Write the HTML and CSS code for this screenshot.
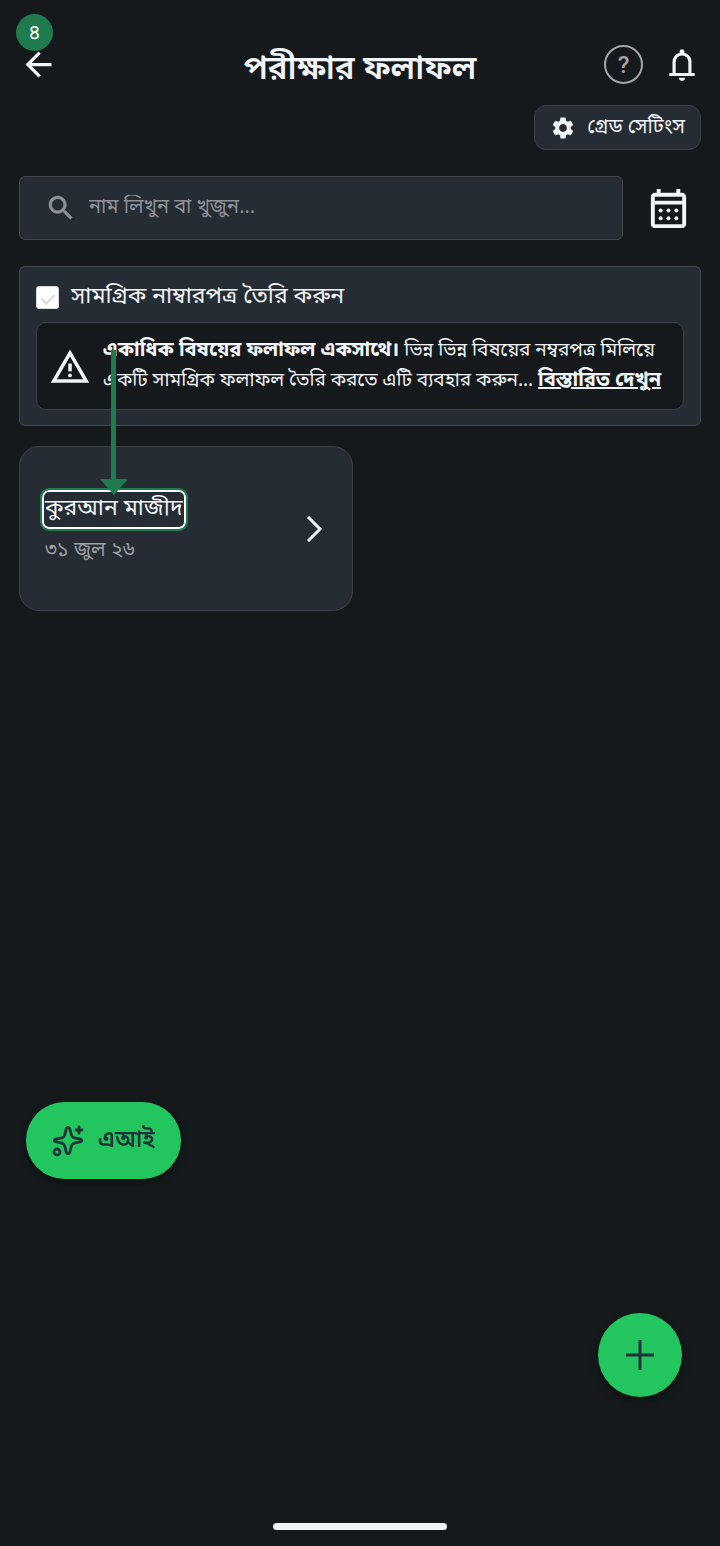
FILE: index.html
```html
<!DOCTYPE html>
<html lang="bn">
<head>
  <meta charset="UTF-8" />
  <meta name="viewport" content="width=device-width, initial-scale=1" />
  <title>পরীক্ষার ফলাফল</title>
  <link rel="stylesheet" href="styles.css">
</head>
<body>
  <header class="topbar">
    <button class="icon-btn back" aria-label="Back">
      <svg width="39" height="39" viewBox="0 0 24 24" fill="currentColor"><path d="M20 11H7.83l5.59-5.59L12 4l-8 8 8 8 1.41-1.41L7.83 13H20v-2z"/></svg>
    </button>
    <h1>পরীক্ষার ফলাফল</h1>
    <div class="topbar-actions">
      <button class="icon-btn help" aria-label="Help">?</button>
      <button class="icon-btn" aria-label="Notifications">
        <svg width="38" height="38" viewBox="0 0 24 24" fill="currentColor"><path d="M4 19v-2h2v-7q0-2.075 1.25-3.687T10.5 4.2v-.7q0-.625.438-1.062T12 2t1.063.438T13.5 3.5v.7q2 .5 3.25 2.113T18 10v7h2v2zm8 3q-.825 0-1.412-.587T10 20h4q0 .825-.587 1.413T12 22m-4-5h8v-7q0-1.65-1.175-2.825T12 6T9.175 7.175T8 10z"/></svg>
      </button>
    </div>
    <span class="step-badge">৪</span>
  </header>

  <main>
    <button class="grade-btn">
      <svg width="26" height="26" viewBox="0 0 24 24" fill="currentColor"><path d="M19.14 12.94c.04-.3.06-.61.06-.94 0-.32-.02-.64-.07-.94l2.03-1.58c.18-.14.23-.41.12-.61l-1.92-3.32c-.12-.22-.37-.29-.59-.22l-2.39.96c-.5-.38-1.03-.7-1.62-.94l-.36-2.54c-.04-.24-.24-.41-.48-.41h-3.84c-.24 0-.43.17-.47.41l-.36 2.54c-.59.24-1.13.57-1.62.94l-2.39-.96c-.22-.08-.47 0-.59.22L2.74 8.87c-.12.21-.08.47.12.61l2.03 1.58c-.05.3-.09.63-.09.94s.02.64.07.94l-2.03 1.58c-.18.14-.23.41-.12.61l1.92 3.32c.12.22.37.29.59.22l2.39-.96c.5.38 1.03.7 1.62.94l.36 2.54c.05.24.24.41.48.41h3.84c.24 0 .44-.17.47-.41l.36-2.54c.59-.24 1.13-.56 1.62-.94l2.39.96c.22.08.47 0 .59-.22l1.92-3.32c.12-.22.07-.47-.12-.61l-2.01-1.58zM12 15.6c-1.98 0-3.6-1.62-3.6-3.6s1.62-3.6 3.6-3.6 3.6 1.62 3.6 3.6-1.62 3.6-3.6 3.6z"/></svg>
      গ্রেড সেটিংস
    </button>

    <div class="search-row">
      <label class="search">
        <svg width="32" height="32" viewBox="0 0 24 24" fill="currentColor"><path d="M15.5 14h-.79l-.28-.27C15.41 12.59 16 11.11 16 9.5 16 5.91 13.09 3 9.5 3S3 5.91 3 9.5 5.91 16 9.5 16c1.61 0 3.09-.59 4.23-1.57l.27.28v.79l5 4.99L20.49 19l-4.99-5zm-6 0C7.01 14 5 11.99 5 9.5S7.01 5 9.5 5 14 7.01 14 9.5 11.99 14 9.5 14z" stroke="currentColor" stroke-width=".4"/></svg>
        <input type="text" placeholder="নাম লিখুন বা খুজুন..." aria-label="নাম লিখুন বা খুজুন" />
      </label>
      <button class="icon-btn calendar" aria-label="Calendar">
        <svg width="47" height="47" viewBox="0 0 24 24" fill="currentColor">
          <path d="M5 22q-.825 0-1.412-.587T3 20V6q0-.825.588-1.412T5 4h1V2h2v2h8V2h2v2h1q.825 0 1.413.588T21 6v14q0 .825-.587 1.413T19 22zm0-2h14V10H5zM5 8h14V6H5z"/>
          <circle cx="8" cy="13" r="1"/><circle cx="12" cy="13" r="1"/><circle cx="16" cy="13" r="1"/>
          <circle cx="8" cy="17" r="1"/><circle cx="12" cy="17" r="1"/><circle cx="16" cy="17" r="1"/>
        </svg>
      </button>
    </div>

    <section class="combined">
      <label class="check-row">
        <input type="checkbox" checked />
        সামগ্রিক নাম্বারপত্র তৈরি করুন
      </label>
      <div class="notice">
        <svg width="42" height="42" viewBox="0 0 24 24" fill="currentColor"><path d="M12 5.99 19.53 19H4.47L12 5.99M12 2 1 21h22L12 2z"/><path d="M11 10h2v4.5h-2z"/><circle cx="12" cy="16.8" r="1.1"/></svg>
        <p><strong>একাধিক বিষয়ের ফলাফল একসাথে।</strong> ভিন্ন ভিন্ন বিষয়ের নম্বরপত্র মিলিয়ে একটি সামগ্রিক ফলাফল তৈরি করতে এটি ব্যবহার করুন... <a href="#">বিস্তারিত দেখুন</a></p>
      </div>
    </section>

    <div class="cards">
      <a class="card" href="#">
        <div class="card-text">
          <span class="subject">কুরআন মাজীদ<svg class="pointer" width="28" height="145" viewBox="0 0 28 145" fill="currentColor"><path d="M11 0h5v129h12L14 145 0 129h11z"/></svg></span>
          <span class="date">৩১ জুল ২৬</span>
        </div>
        <svg width="17" height="26" viewBox="0 0 17 26" fill="none" stroke="currentColor" stroke-width="3"><path d="M2 1l12 12L2 25"/></svg>
      </a>
    </div>
  </main>

  <button class="ai-btn">
    <svg width="32" height="32" viewBox="0 0 32 32" fill="none" stroke="currentColor" stroke-width="2.8" stroke-linejoin="round" stroke-linecap="round">
      <path d="M14.3 3.6q1.7-2.6 3.4 0l1.7 6.3q.7 2.2 2.9 2.9l6.3 1.3q2.4 1.3 0 2.6l-6.3 1.5q-2.2.7-2.9 2.9l-1.7 6.3q-1.7 2.6-3.4 0l-1.5-6.3q-.7-2.2-2.9-2.9l-6.3-1.5q-2.4-1.3 0-2.6l6.3-1.3q2.2-.7 2.9-2.9z"/>
      <path d="M27 2v6M24 5h6"/>
      <circle cx="5" cy="27" r="3"/>
    </svg>
    এআই
  </button>
  <button class="add-btn" aria-label="Add">
    <svg width="30" height="30" viewBox="0 0 30 30" stroke="currentColor" stroke-width="3"><path d="M15 0v30M1 15h28"/></svg>
  </button>
  <div class="home-bar"></div>
</body>
</html>
```

FILE: styles.css
```css
* {
  box-sizing: border-box;
}

body {
  margin: 0;
  min-height: 100vh;
  background: #15191c;
  color: #f1f4f9;
  font-family: "Noto Sans Bengali", "Noto Sans", sans-serif;
  font-size: 20px;
}

button {
  font: inherit;
  color: inherit;
  border: none;
  cursor: pointer;
}

svg {
  display: block;
  flex: none;
}

.topbar {
  position: relative;
  display: grid;
  grid-template-columns: 1fr auto 1fr;
  align-items: center;
  height: 105px;
  padding: 24px 19px 0;
}

.topbar h1 {
  margin: 0;
  padding-top: 12px;
  font-size: 33px;
  font-weight: 600;
  line-height: 40px;
}

.topbar-actions {
  display: flex;
  align-items: center;
  justify-content: flex-end;
  gap: 20px;
}

.icon-btn {
  padding: 0;
  background: none;
}

.back {
  justify-self: start;
}

.help {
  width: 39px;
  height: 39px;
  border: 2px solid #a3a5a7;
  border-radius: 50%;
  color: #a3a5a7;
  font-family: Roboto, sans-serif;
  font-size: 24px;
  font-weight: 500;
  line-height: 32px;
}

.step-badge {
  position: absolute;
  top: 14px;
  left: 16px;
  width: 37px;
  height: 37px;
  border-radius: 50%;
  background: #1f7a4d;
  color: white;
  text-align: center;
  line-height: 40px;
}

main {
  display: flex;
  flex-direction: column;
  padding: 0 19px;
}

.grade-btn {
  align-self: flex-end;
  display: flex;
  align-items: center;
  gap: 11px;
  height: 45px;
  padding: 0 15px;
  background: #262c33;
  border: 1px solid #3d4045;
  border-radius: 12px;
}

.search-row {
  display: flex;
  align-items: center;
  gap: 22px;
  margin-top: 26px;
}

.search {
  flex: 1;
  display: flex;
  align-items: center;
  gap: 12px;
  height: 64px;
  padding: 0 25px;
  background: #262c33;
  border: 1px solid #45484c;
  border-radius: 6px;
  color: #8e9298;
}

.search input {
  flex: 1;
  min-width: 0;
  padding: 0;
  background: none;
  border: none;
  outline: none;
  color: #f1f4f9;
  font: inherit;
  line-height: 40px;
}

.search input::placeholder {
  color: #8e9298;
  opacity: 1;
  line-height: 40px;
}

.calendar {
  margin-right: 9px;
}

.combined {
  margin-top: 26px;
  padding: 8px 16px 15px;
  background: #262c33;
  border: 1px solid #45484c;
  border-radius: 6px;
}

.check-row {
  display: flex;
  align-items: center;
  gap: 12px;
  margin-bottom: 3px;
  height: 44px;
  font-size: 23px;
}

.check-row input {
  appearance: none;
  display: grid;
  place-items: center;
  width: 23px;
  height: 23px;
  margin: 0;
  background: white;
  border: 1px solid #d9dbde;
  border-radius: 3px;
}

.check-row input:checked::before {
  content: "";
  width: 6px;
  height: 11px;
  border: solid #d9d9d9;
  border-width: 0 2px 2px 0;
  transform: rotate(45deg);
}

.notice {
  display: flex;
  align-items: center;
  gap: 12px;
  padding: 14px 12px 12px;
  background: #15191c;
  border: 1px solid #3d4045;
  border-radius: 10px;
}

.notice p {
  margin: 0;
  font-size: 19px;
  line-height: 30px;
}

.notice strong,
.notice a {
  color: inherit;
  font-size: 20px;
  font-weight: 700;
  line-height: 20px;
}

.cards {
  display: grid;
  grid-template-columns: 1fr 1fr;
  gap: 14px;
  margin-top: 20px;
}

.card {
  display: flex;
  align-items: center;
  justify-content: space-between;
  min-height: 165px;
  padding: 0 29px 0 22px;
  background: #262c33;
  border: 1px solid #3d4045;
  border-radius: 20px;
  color: inherit;
  text-decoration: none;
}

.card-text {
  display: flex;
  flex-direction: column;
  align-items: flex-start;
  gap: 5px;
}

.subject {
  position: relative;
  border: 2px solid white;
  border-radius: 7px;
  outline: 2px solid #1f7a4d;
  padding: 0 1px;
  font-size: 23px;
  line-height: 35px;
}

.pointer {
  position: absolute;
  bottom: 32px;
  left: 50%;
  transform: translateX(-50%);
  color: #1f7a4d;
}

.date {
  padding-left: 3px;
  color: #9b9ea4;
  font-size: 20px;
  line-height: 34px;
}

.ai-btn {
  position: fixed;
  left: 26px;
  bottom: 367px;
  display: flex;
  align-items: center;
  gap: 14px;
  height: 77px;
  padding: 0 26px;
  background: #22c55e;
  border-radius: 39px;
  color: #20343a;
  font-size: 23px;
  font-weight: 600;
  box-shadow: 0 4px 8px #0004;
}

.add-btn {
  position: fixed;
  right: 38px;
  bottom: 149px;
  display: grid;
  place-items: center;
  width: 84px;
  height: 84px;
  padding: 0;
  background: #22c55e;
  border-radius: 50%;
  color: #20343a;
  box-shadow: 0 4px 8px #0004;
}

.home-bar {
  position: fixed;
  bottom: 16px;
  left: 50%;
  width: 174px;
  height: 7px;
  border-radius: 4px;
  background: #f1f4f4;
  transform: translateX(-50%);
}
```
